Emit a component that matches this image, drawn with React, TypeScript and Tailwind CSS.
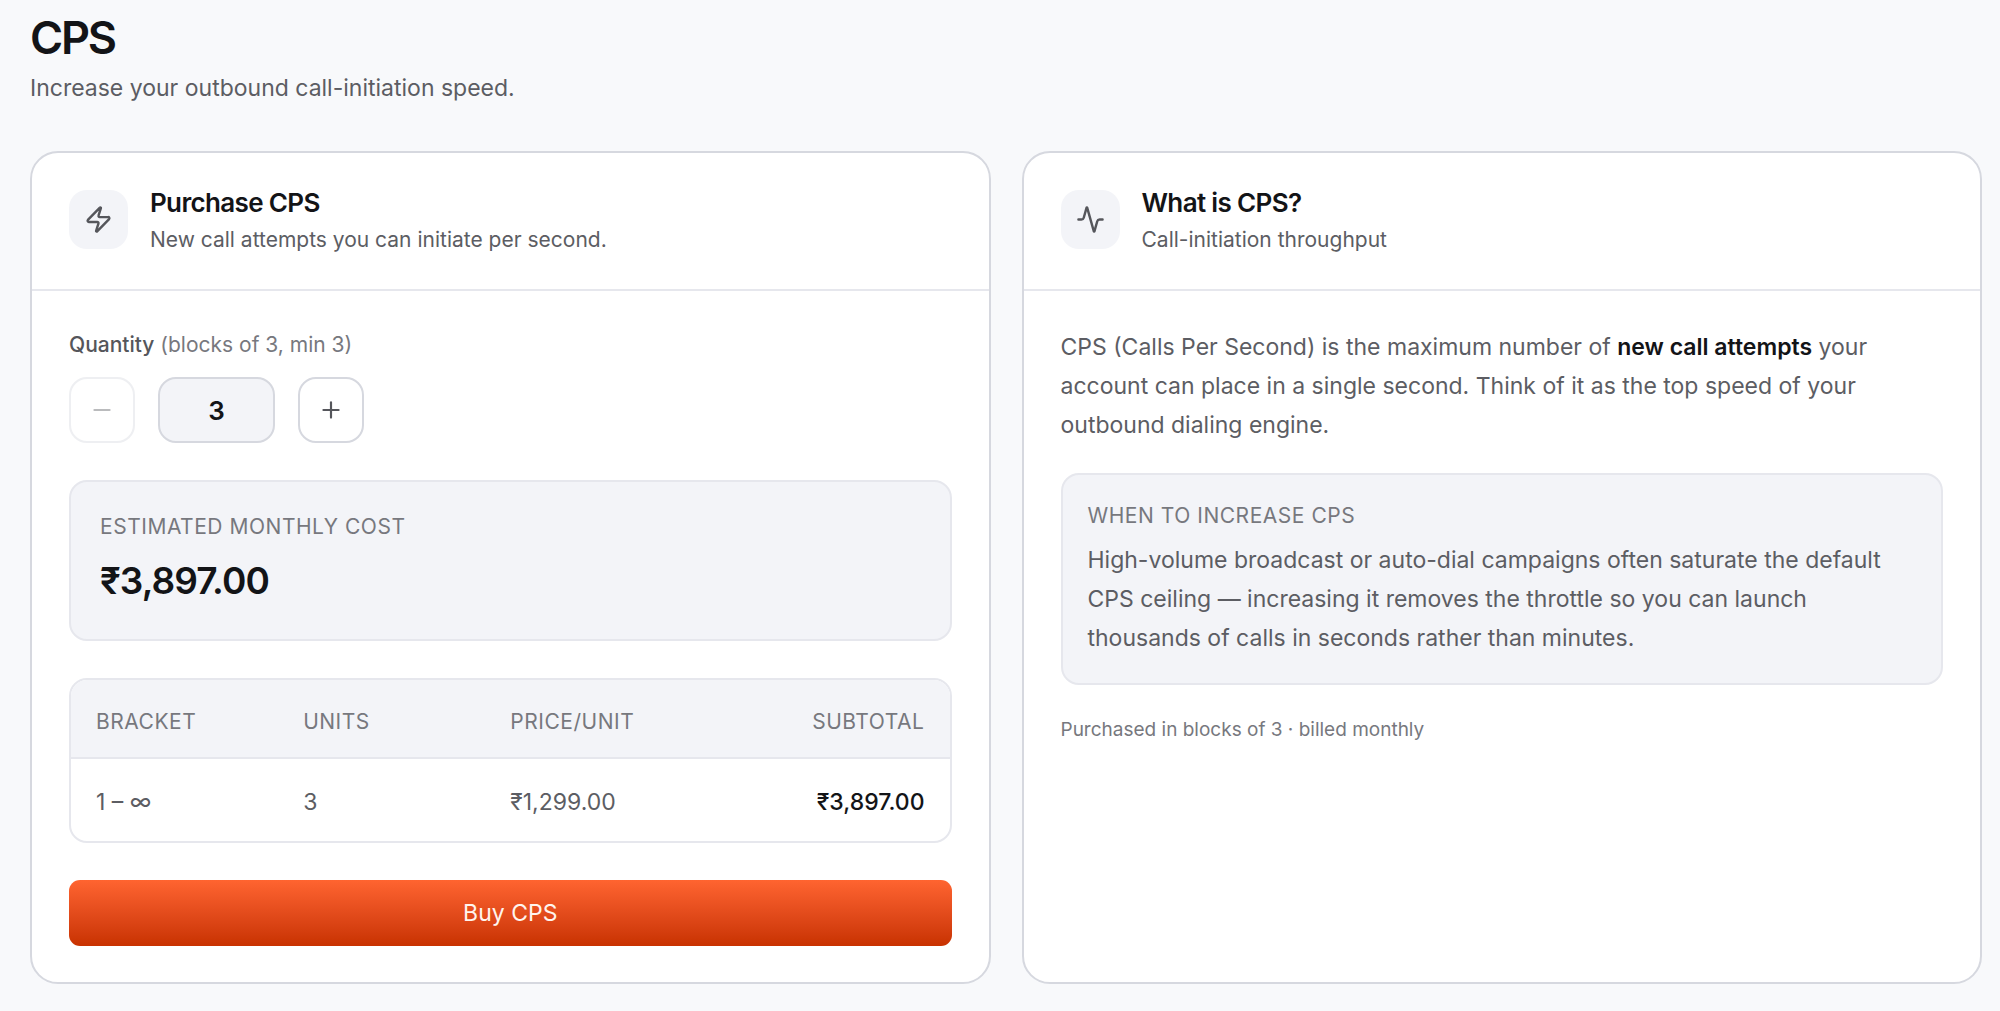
import { useState, type ReactNode } from "react";
import { Activity, Minus, Plus, Zap } from "lucide-react";

const BLOCK = 3;
const UNIT_PRICE = 1299;

const rupees = (value: number) =>
  "₹" + value.toLocaleString("en-IN", { minimumFractionDigits: 2, maximumFractionDigits: 2 });

function Card({
  icon,
  title,
  subtitle,
  children,
}: {
  icon: ReactNode;
  title: string;
  subtitle: string;
  children: ReactNode;
}) {
  return (
    <section className="flex flex-col rounded-[28px] border-2 border-[#d6d8df] bg-white">
      <header className="flex items-center gap-[22px] border-b-2 border-[#e6e7ed] px-[37px] pt-8 pb-[35px]">
        <div className="flex size-[59px] shrink-0 items-center justify-center rounded-[18px] bg-[#f3f4f8] text-[#55565b]">
          {icon}
        </div>
        <div>
          <h2 className="text-[26px] leading-[36px] font-semibold tracking-tight text-[#131417]">{title}</h2>
          <p className="mt-[5px] text-[21px] leading-[28px] text-[#5c5d63]">{subtitle}</p>
        </div>
      </header>
      {children}
    </section>
  );
}

export default function App() {
  const [quantity, setQuantity] = useState(BLOCK);
  const total = rupees(quantity * UNIT_PRICE);

  return (
    <main className="min-h-screen bg-[#f8f9fb] pt-3 pr-[18px] pb-6 pl-[30px] font-['Inter',sans-serif] text-[#5c5d63]">
      <h1 className="text-[45px] leading-[52px] font-semibold tracking-tighter text-[#131417]">CPS</h1>
      <p className="mt-2 text-[23px] leading-[32px]">Increase your outbound call-initiation speed.</p>

      <div className="mt-[47px] grid grid-cols-2 gap-[31px]">
        <Card
          icon={<Zap size={29} strokeWidth={2} />}
          title="Purchase CPS"
          subtitle="New call attempts you can initiate per second."
        >
          <div className="flex flex-col px-[37px] pt-10 pb-9">
            <label htmlFor="quantity" className="text-[21px] leading-[28px] text-[#77787e]">
              <span className="font-medium text-[#55565b]">Quantity</span> (blocks of 3, min 3)
            </label>
            <div className="mt-[18px] flex gap-[23px]">
              <button
                type="button"
                aria-label="Decrease quantity"
                disabled={quantity <= BLOCK}
                onClick={() => setQuantity(quantity - BLOCK)}
                className="flex size-[66px] items-center justify-center rounded-[18px] border-2 border-[#d6d8df] bg-white text-[#55565b] disabled:opacity-40"
              >
                <Minus size={26} strokeWidth={2} />
              </button>
              <input
                id="quantity"
                readOnly
                value={quantity}
                className="h-[66px] w-[117px] rounded-[18px] border-2 border-[#d6d8df] bg-[#f3f4f8] text-center text-[26px] font-semibold text-[#131417]"
              />
              <button
                type="button"
                aria-label="Increase quantity"
                onClick={() => setQuantity(quantity + BLOCK)}
                className="flex size-[66px] items-center justify-center rounded-[18px] border-2 border-[#d6d8df] bg-white text-[#55565b]"
              >
                <Plus size={26} strokeWidth={2} />
              </button>
            </div>

            <div className="mt-[37px] rounded-[18px] border-2 border-[#e6e7ed] bg-[#f3f4f8] px-[29px] pt-[31px] pb-[35px]">
              <p className="text-[21px] leading-[28px] tracking-wide text-[#77787e] uppercase">Estimated monthly cost</p>
              <p className="mt-[17px] text-[37px] leading-[46px] font-semibold tracking-tight text-[#131417]">{total}</p>
            </div>

            <div className="mt-[37px] overflow-hidden rounded-[18px] border-2 border-[#e6e7ed]">
              <table className="block w-full">
                <thead className="block border-b-2 border-[#e6e7ed] bg-[#f3f4f8]">
                  <tr className="grid grid-cols-4 px-[25px] pt-7 pb-[21px] text-left text-[21px] leading-[28px] tracking-wide text-[#77787e] uppercase">
                    <th className="font-normal">Bracket</th>
                    <th className="font-normal">Units</th>
                    <th className="font-normal">Price/unit</th>
                    <th className="text-right font-normal">Subtotal</th>
                  </tr>
                </thead>
                <tbody className="block">
                  <tr className="grid grid-cols-4 px-[25px] pt-[27px] pb-[23px] text-[23px] leading-[32px]">
                    <td>1 – ∞</td>
                    <td>{quantity}</td>
                    <td>{rupees(UNIT_PRICE)}</td>
                    <td className="text-right font-medium text-[#131417]">{total}</td>
                  </tr>
                </tbody>
              </table>
            </div>

            <button
              type="button"
              className="mt-[37px] h-[66px] rounded-[11px] bg-linear-to-b from-[#ff6430] to-[#c83200] text-[23px] text-[#fff4ee]"
            >
              Buy CPS
            </button>
          </div>
        </Card>

        <Card icon={<Activity size={29} strokeWidth={2} />} title="What is CPS?" subtitle="Call-initiation throughput">
          <div className="px-[37px] pt-[37px] pb-9">
            <p className="text-[23px] leading-[39px]">
              CPS (Calls Per Second) is the maximum number of{" "}
              <strong className="font-semibold text-[#131417]">new call attempts</strong> your account can place in a
              single second. Think of it as the top speed of your outbound dialing engine.
            </p>
            <div className="mt-7 rounded-[18px] border-2 border-[#e6e7ed] bg-[#f3f4f8] px-[25px] pt-[27px] pb-[25px]">
              <h3 className="text-[21px] leading-[28px] tracking-wide text-[#77787e] uppercase">
                When to increase CPS
              </h3>
              <p className="mt-[11px] text-[23px] leading-[39px]">
                High-volume broadcast or auto-dial campaigns often saturate the default CPS ceiling — increasing it
                removes the throttle so you can launch thousands of calls in seconds rather than minutes.
              </p>
            </div>
            <p className="mt-[31px] text-[19px] leading-[28px] text-[#77787e]">Purchased in blocks of 3 · billed monthly</p>
          </div>
        </Card>
      </div>
    </main>
  );
}
